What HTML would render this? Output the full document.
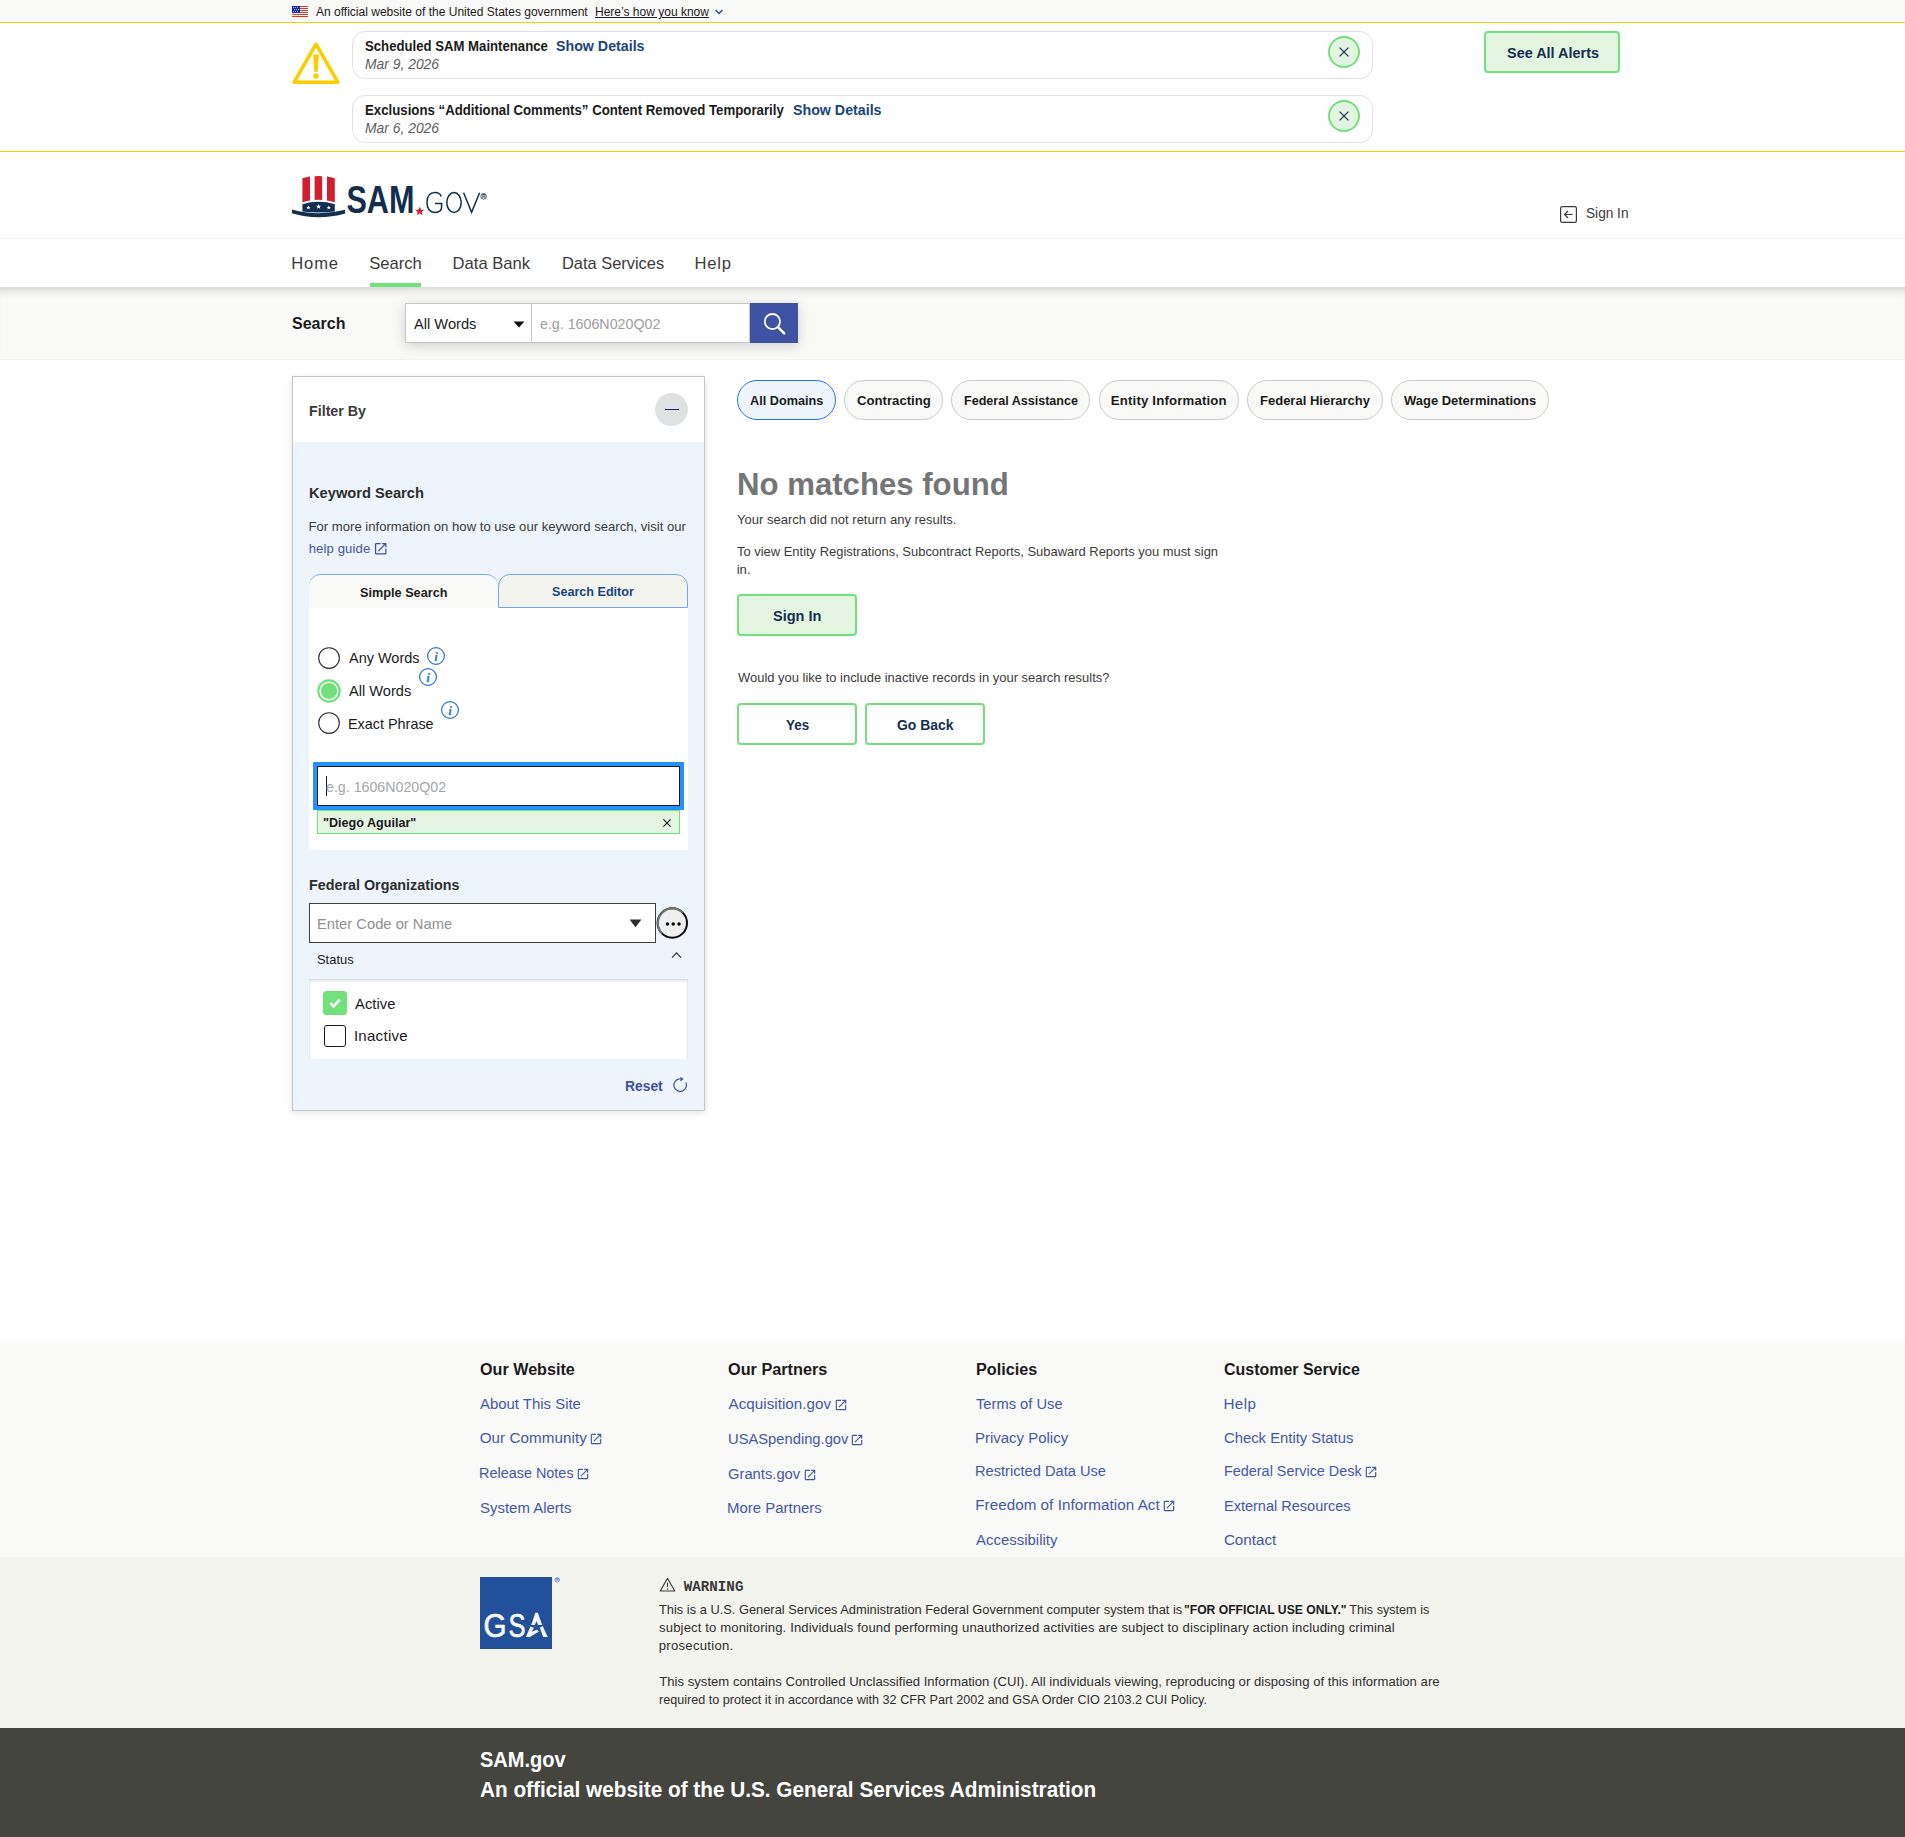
<!DOCTYPE html>
<html lang="en"><head><meta charset="utf-8"><title>SAM.gov | Search</title>
<style>
html,body{margin:0;padding:0;}
body{width:1905px;height:1837px;position:relative;overflow:hidden;background:#fff;font-family:"Liberation Sans", sans-serif;color:#1b1b1b;}
#page div,#page svg{position:absolute;box-sizing:border-box;}
.t{position:absolute;white-space:pre;line-height:1;transform-origin:0 50%;}
</style></head><body><div id="page" style="position:absolute;left:0;top:0;width:1905px;height:1837px;">
<div style="left:0px;top:0px;width:1905px;height:21px;background:#f9f9f7;"></div>
<svg style="left:292px;top:6px" width="16" height="11" viewBox="0 0 16 11">
<rect width="16" height="11" fill="#fff"/>
<g fill="#db3a1c"><rect y="0" width="16" height="1"/><rect y="2" width="16" height="1"/><rect y="4" width="16" height="1"/><rect y="6" width="16" height="1"/><rect y="8" width="16" height="1"/><rect y="10" width="16" height="1"/></g>
<rect width="8" height="7" fill="#1327b5"/>
<g fill="#fff"><circle cx="1.5" cy="1.6" r="0.5"/><circle cx="3.5" cy="1.6" r="0.5"/><circle cx="5.5" cy="1.6" r="0.5"/><circle cx="2.5" cy="3.5" r="0.5"/><circle cx="4.5" cy="3.5" r="0.5"/><circle cx="6.5" cy="3.5" r="0.5"/><circle cx="1.5" cy="5.4" r="0.5"/><circle cx="3.5" cy="5.4" r="0.5"/><circle cx="5.5" cy="5.4" r="0.5"/></g></svg>
<svg style="left:714px;top:8px" width="10" height="8" viewBox="0 0 10 8"><path d="M1.5 2 L5 5.5 L8.5 2" fill="none" stroke="#2b4b96" stroke-width="1.5"/></svg>
<div style="left:0px;top:22px;width:1905px;height:130px;background:#fff;border-top:1px solid #face00;border-bottom:1px solid #face00;"></div>
<svg style="left:290px;top:38px" width="52" height="50" viewBox="0 0 52 50">
<path d="M26 6.2 L47.8 44.2 L4.2 44.2 Z" fill="none" stroke="#face00" stroke-width="3.6" stroke-linejoin="round"/>
<path d="M23.7 16.8 L28.3 16.8 L27.5 33.6 L24.5 33.6 Z" fill="#face00" stroke="#face00" stroke-width="0.8" stroke-linejoin="round"/><circle cx="26" cy="38" r="2.7" fill="#face00"/></svg>
<div style="left:352px;top:31px;width:1021px;height:48px;border:1px solid #e1e1e1;border-radius:13px;background:#fff;"></div>
<svg style="left:1327px;top:35px" width="34" height="34" viewBox="0 0 34 34">
<circle cx="17" cy="17" r="15" fill="#e3f5e1" stroke="#70e17b" stroke-width="2"/>
<path d="M12.6 12.6 L21.4 21.4 M21.4 12.6 L12.6 21.4" stroke="#162e51" stroke-width="1.25" fill="none"/></svg>
<div style="left:352px;top:95px;width:1021px;height:48px;border:1px solid #e1e1e1;border-radius:13px;background:#fff;"></div>
<svg style="left:1327px;top:99px" width="34" height="34" viewBox="0 0 34 34">
<circle cx="17" cy="17" r="15" fill="#e3f5e1" stroke="#70e17b" stroke-width="2"/>
<path d="M12.6 12.6 L21.4 21.4 M21.4 12.6 L12.6 21.4" stroke="#162e51" stroke-width="1.25" fill="none"/></svg>
<div style="left:1484px;top:31px;width:136px;height:41.5px;border:2px solid #70e17b;border-radius:4px;background:#e3f5e1;"></div>
<div style="left:0px;top:238px;width:1905px;height:1px;background:#f3f3ee;"></div>
<svg style="left:290px;top:174px" width="200" height="44" viewBox="0 0 200 44">
<path d="M12.4 4.3 Q16 3 20 2.6 L20 26.6 Q16 27.2 12.4 28.4 Z" fill="#d0202e"/>
<path d="M24.6 2.2 Q28.4 1.9 32.2 2.2 L32.2 26 Q28.4 25.7 24.6 26 Z" fill="#d0202e"/>
<path d="M37 2.6 Q41 3 44.8 4.3 L44.8 28.4 Q41 27.2 37 26.6 Z" fill="#d0202e"/>
<path d="M12.4 30.2 Q28.6 25.4 44.8 30.2 L44.8 37.4 Q28.6 39.6 12.4 37.4 Z" fill="#112e51"/>
<g fill="#fff">
<path transform="translate(18.4,33.6) scale(0.13)" d="M0,-16 L4.7,-5 L16,-5 L7,2.5 L10,14 L0,7 L-10,14 L-7,2.5 L-16,-5 L-4.7,-5 Z"/>
<path transform="translate(28.6,32.6) scale(0.16)" d="M0,-16 L4.7,-5 L16,-5 L7,2.5 L10,14 L0,7 L-10,14 L-7,2.5 L-16,-5 L-4.7,-5 Z"/>
<path transform="translate(38.8,33.6) scale(0.13)" d="M0,-16 L4.7,-5 L16,-5 L7,2.5 L10,14 L0,7 L-10,14 L-7,2.5 L-16,-5 L-4.7,-5 Z"/>
</g>
<path d="M2.1 35.6 Q28 43 55 35.8 L55.2 39.4 Q28 47 1.9 39.2 Z" fill="#112e51"/>
<text x="56.4" y="38.7" font-family='"Liberation Sans", sans-serif' font-weight="700" font-size="39" fill="#112e51" textLength="68" lengthAdjust="spacingAndGlyphs">SAM</text>
<path transform="translate(129.7,37.2) scale(0.285)" d="M0,-16 L4.7,-5 L16,-5 L7,2.5 L10,14 L0,7 L-10,14 L-7,2.5 L-16,-5 L-4.7,-5 Z" fill="#d0202e"/>
<g fill="none" stroke="#112e51" stroke-width="1.5">
<path d="M151.2 22.6 Q150 18.6 145 18.6 Q137 18.6 137 28.6 Q137 38.4 145 38.4 Q151.6 38.4 151.6 33 L151.6 29.4 L145 29.4"/>
<ellipse cx="164" cy="28.5" rx="7.2" ry="9.9"/>
<path d="M173.6 18.8 L181.6 38.2 L189.6 18.8"/>
</g>
<circle cx="193.6" cy="22.3" r="2.8" fill="none" stroke="#112e51" stroke-width="0.8"/>
<text x="192" y="24.1" font-family='"Liberation Sans", sans-serif' font-weight="700" font-size="4.8" fill="#112e51">R</text>
</svg>
<svg style="left:1560px;top:206px" width="17" height="17" viewBox="0 0 17 17">
<rect x="0.6" y="0.6" width="15.8" height="15.8" rx="1.6" fill="none" stroke="#3a3a3a" stroke-width="1.2"/>
<path d="M12.6 8.5 L4.6 8.5 M8 5 L4.6 8.5 L8 12" fill="none" stroke="#3a3a3a" stroke-width="1.2"/></svg>
<div style="left:370px;top:283px;width:51px;height:4px;background:#70e17b;"></div>
<div style="left:0px;top:287px;width:1905px;height:73px;background:#f9f9f7;border-bottom:1px solid #f3f3ee;box-shadow:inset 0 9px 9px -6px rgba(0,0,0,0.16);"></div>
<div style="left:405px;top:303px;width:393px;height:40px;box-shadow:0 3px 12px rgba(0,0,0,0.16);background:#fff;"></div>
<div style="left:405px;top:303px;width:127px;height:39.5px;border:1px solid #c6c6c6;background:#fff;"></div>
<div style="left:531px;top:303px;width:219px;height:39.5px;border:1px solid #c6c6c6;background:#fff;"></div>
<svg style="left:513px;top:321px" width="12" height="7" viewBox="0 0 12 7"><path d="M0.6 0.6 L11.4 0.6 L6 6.6 Z" fill="#111"/></svg>
<div style="left:750px;top:303px;width:48px;height:40px;background:#3f53a5;"></div>
<svg style="left:761px;top:310px" width="26" height="26" viewBox="0 0 26 26">
<circle cx="11.4" cy="11.6" r="7.6" fill="none" stroke="#fff" stroke-width="1.8"/>
<path d="M17 17.2 L23.2 23.4" stroke="#fff" stroke-width="2.4" stroke-linecap="round"/></svg>
<div style="left:292px;top:376px;width:413px;height:734.5px;background:#edf4fb;border:1px solid #c4c5c7;box-shadow:0 2px 7px rgba(0,0,0,0.115);"></div>
<div style="left:293px;top:377px;width:411px;height:65px;background:#fff;"></div>
<div style="left:654.8px;top:393px;width:33.2px;height:33.2px;border-radius:50%;background:#dfe1e2;"></div>
<div style="left:665px;top:408.7px;width:14px;height:1.4px;background:#162e51;"></div>
<svg style="left:372.9px;top:540.9px" width="15.4" height="15.4" viewBox="0 0 24 24"><path d="M19 19H5V5h7V3H5a2 2 0 0 0-2 2v14a2 2 0 0 0 2 2h14c1.1 0 2-.9 2-2v-7h-2v7zM14 3v2h3.59l-9.83 9.83 1.41 1.41L19 6.41V10h2V3h-7z" fill="#3f52a3"/></svg>
<div style="left:309px;top:574px;width:189.3px;height:34px;background:#f9f9f7;border-top:1px solid #73a8e8;border-radius:12px 12px 0 0;"></div>
<div style="left:498px;top:574px;width:189.8px;height:34px;background:#f3f4ee;border:1px solid #73a8e8;border-radius:12px 12px 0 0;"></div>
<div style="left:309px;top:608px;width:378.8px;height:242px;background:#fff;"></div>
<svg style="left:316px;top:644.8px" width="26" height="26" viewBox="0 0 26 26"><circle cx="13" cy="13" r="10.3" fill="#fff" stroke="#2e2e2e" stroke-width="1.15"/></svg>
<svg style="left:316px;top:678px" width="26" height="26" viewBox="0 0 26 26"><circle cx="13" cy="13" r="10.7" fill="#fff" stroke="#70e17b" stroke-width="2.2"/><circle cx="13" cy="13" r="8.1" fill="#70e17b"/></svg>
<svg style="left:316px;top:710px" width="26" height="26" viewBox="0 0 26 26"><circle cx="13" cy="13" r="10.3" fill="#fff" stroke="#2e2e2e" stroke-width="1.15"/></svg>
<svg style="left:426.2px;top:646.3px" width="20" height="20" viewBox="0 0 20 20"><circle cx="10" cy="10" r="8.4" fill="none" stroke="#2672de" stroke-width="1.2"/>
<text x="10" y="14.6" text-anchor="middle" font-family='"Liberation Serif", serif' font-style="italic" font-weight="700" font-size="13" fill="#2672de">i</text></svg>
<svg style="left:418px;top:667.3px" width="20" height="20" viewBox="0 0 20 20"><circle cx="10" cy="10" r="8.4" fill="none" stroke="#2672de" stroke-width="1.2"/>
<text x="10" y="14.6" text-anchor="middle" font-family='"Liberation Serif", serif' font-style="italic" font-weight="700" font-size="13" fill="#2672de">i</text></svg>
<svg style="left:440.1px;top:700px" width="20" height="20" viewBox="0 0 20 20"><circle cx="10" cy="10" r="8.4" fill="none" stroke="#2672de" stroke-width="1.2"/>
<text x="10" y="14.6" text-anchor="middle" font-family='"Liberation Serif", serif' font-style="italic" font-weight="700" font-size="13" fill="#2672de">i</text></svg>
<div style="left:313.4px;top:762.3px;width:370.4px;height:47.6px;background:#2491ff;"></div>
<div style="left:317.4px;top:766px;width:362.8px;height:40px;background:#fff;border:1px solid #1b1b1b;"></div>
<div style="left:326px;top:776.2px;width:1px;height:19.4px;background:#1b1b1b;"></div>
<div style="left:317px;top:810px;width:363px;height:24px;background:#e3f5e1;border:1px solid #70e17b;"></div>
<svg style="left:662px;top:818px" width="10" height="10" viewBox="0 0 10 10"><path d="M1.4 1.4 L8.6 8.6 M8.6 1.4 L1.4 8.6" stroke="#1b1b1b" stroke-width="1.2" fill="none"/></svg>
<div style="left:309px;top:903px;width:347px;height:40px;background:#fff;border:1px solid #3f3f38;"></div>
<svg style="left:629.2px;top:918.6px" width="13" height="9" viewBox="0 0 13 9"><path d="M0.6 0.5 L12.4 0.5 L6.5 8.2 Z" fill="#2e2e2a"/></svg>
<svg style="left:656px;top:907px" width="33" height="33" viewBox="0 0 33 33"><circle cx="16.3" cy="16.0" r="14.7" fill="#efefef" stroke="#0a0a0a" stroke-width="2"/>
<path d="M5.91 26.39 A14.7 14.7 0 0 1 26.69 5.61" fill="none" stroke="#767676" stroke-width="2"/>
<circle cx="11.5" cy="17.1" r="1.75" fill="#0a0a0a"/><circle cx="17.2" cy="17.1" r="1.75" fill="#0a0a0a"/><circle cx="23" cy="17.1" r="1.75" fill="#0a0a0a"/></svg>
<svg style="left:670px;top:951px" width="13" height="9" viewBox="0 0 13 9"><path d="M2.1 6.7 L6.55 1.9 L11 6.7" fill="none" stroke="#2e2e2e" stroke-width="1.1"/></svg>
<div style="left:309px;top:979.4px;width:378.7px;height:80px;background:#fff;border:1px solid #e3e6e9;border-top-color:#d9dcdf;border-bottom:none;box-shadow:inset 0 2px 2px rgba(0,0,0,0.07);"></div>
<div style="left:323px;top:991px;width:24px;height:24px;background:#70e17b;border-radius:3.5px;"></div>
<svg style="left:323px;top:991px" width="24" height="24" viewBox="0 0 24 24"><path d="M7.2 12 L10.6 15.4 L16.8 8.6" fill="none" stroke="#fff" stroke-width="2.6"/></svg>
<div style="left:323.8px;top:1024.8px;width:22.2px;height:22.2px;background:#fff;border:1.6px solid #1b1b1b;border-radius:3px;"></div>
<svg style="left:671.5px;top:1075.5px" width="17" height="17" viewBox="0 0 17 17"><path d="M13.9 6.44 A6.3 6.3 0 1 1 7.65 2.82" fill="none" stroke="#3d4fa3" stroke-width="1.15"/>
<path d="M8.3 0.7 L11.7 3.1 L8.3 5.5 Z" fill="#3d4fa3"/></svg>
<div style="left:737px;top:380.3px;width:98.6px;height:39.6px;border:1px solid #2672de;border-radius:20px;background:#eef5fd;"></div>
<div style="left:843.8px;top:380.3px;width:98.8px;height:39.6px;border:1px solid #c9cbcd;border-radius:20px;background:#f9f9f7;"></div>
<div style="left:951px;top:380.3px;width:139.4px;height:39.6px;border:1px solid #c9cbcd;border-radius:20px;background:#f9f9f7;"></div>
<div style="left:1098.8px;top:380.3px;width:139.9px;height:39.6px;border:1px solid #c9cbcd;border-radius:20px;background:#f9f9f7;"></div>
<div style="left:1247px;top:380.3px;width:136px;height:39.6px;border:1px solid #c9cbcd;border-radius:20px;background:#f9f9f7;"></div>
<div style="left:1390.7px;top:380.3px;width:157.9px;height:39.6px;border:1px solid #c9cbcd;border-radius:20px;background:#f9f9f7;"></div>
<div style="left:737px;top:594px;width:120px;height:42px;border:2px solid #70e17b;border-radius:4px;background:#e3f5e1;"></div>
<div style="left:737px;top:703px;width:120px;height:42px;border:2px solid #70e17b;border-radius:4px;background:#fff;"></div>
<div style="left:865px;top:703px;width:120px;height:42px;border:2px solid #70e17b;border-radius:4px;background:#fff;"></div>
<div style="left:0px;top:1342.6px;width:1905px;height:214.4px;background:#f9f9f7;"></div>
<div style="left:0px;top:1556.8px;width:1905px;height:171.4px;background:#f4f4ef;"></div>
<div style="left:0px;top:1728px;width:1905px;height:109px;background:#454540;"></div>
<svg style="left:589.4px;top:1432.1000000000001px" width="14" height="14" viewBox="0 0 24 24"><path d="M19 19H5V5h7V3H5a2 2 0 0 0-2 2v14a2 2 0 0 0 2 2h14c1.1 0 2-.9 2-2v-7h-2v7zM14 3v2h3.59l-9.83 9.83 1.41 1.41L19 6.41V10h2V3h-7z" fill="#4458a8"/></svg>
<svg style="left:575.8px;top:1466.7px" width="14" height="14" viewBox="0 0 24 24"><path d="M19 19H5V5h7V3H5a2 2 0 0 0-2 2v14a2 2 0 0 0 2 2h14c1.1 0 2-.9 2-2v-7h-2v7zM14 3v2h3.59l-9.83 9.83 1.41 1.41L19 6.41V10h2V3h-7z" fill="#4458a8"/></svg>
<svg style="left:833.5px;top:1398.0px" width="14" height="14" viewBox="0 0 24 24"><path d="M19 19H5V5h7V3H5a2 2 0 0 0-2 2v14a2 2 0 0 0 2 2h14c1.1 0 2-.9 2-2v-7h-2v7zM14 3v2h3.59l-9.83 9.83 1.41 1.41L19 6.41V10h2V3h-7z" fill="#4458a8"/></svg>
<svg style="left:850.3000000000001px;top:1433.2px" width="14" height="14" viewBox="0 0 24 24"><path d="M19 19H5V5h7V3H5a2 2 0 0 0-2 2v14a2 2 0 0 0 2 2h14c1.1 0 2-.9 2-2v-7h-2v7zM14 3v2h3.59l-9.83 9.83 1.41 1.41L19 6.41V10h2V3h-7z" fill="#4458a8"/></svg>
<svg style="left:802.5px;top:1467.8px" width="14" height="14" viewBox="0 0 24 24"><path d="M19 19H5V5h7V3H5a2 2 0 0 0-2 2v14a2 2 0 0 0 2 2h14c1.1 0 2-.9 2-2v-7h-2v7zM14 3v2h3.59l-9.83 9.83 1.41 1.41L19 6.41V10h2V3h-7z" fill="#4458a8"/></svg>
<svg style="left:1162.1000000000001px;top:1499.2px" width="14" height="14" viewBox="0 0 24 24"><path d="M19 19H5V5h7V3H5a2 2 0 0 0-2 2v14a2 2 0 0 0 2 2h14c1.1 0 2-.9 2-2v-7h-2v7zM14 3v2h3.59l-9.83 9.83 1.41 1.41L19 6.41V10h2V3h-7z" fill="#4458a8"/></svg>
<svg style="left:1363.7px;top:1465.2px" width="14" height="14" viewBox="0 0 24 24"><path d="M19 19H5V5h7V3H5a2 2 0 0 0-2 2v14a2 2 0 0 0 2 2h14c1.1 0 2-.9 2-2v-7h-2v7zM14 3v2h3.59l-9.83 9.83 1.41 1.41L19 6.41V10h2V3h-7z" fill="#4458a8"/></svg>
<svg style="left:480px;top:1577px" width="82" height="73" viewBox="0 0 82 73">
<rect x="0" y="0" width="72" height="72" fill="#22509a"/>
<g fill="#f7f7f2" stroke="#f7f7f2" stroke-width="0.7" font-family='"Liberation Sans", sans-serif' font-size="34">
<text x="3.4" y="59.9" textLength="23" lengthAdjust="spacingAndGlyphs">G</text>
<text x="28.4" y="59.9" textLength="17" lengthAdjust="spacingAndGlyphs">S</text>
<polygon stroke="none" points="55.4,35.8 57.8,35.8 62.2,47.9 58.2,47.9 56.4,44.2 54.8,47.9 51.2,47.9"/>
<polygon stroke="none" points="59.8,50.7 62.7,48.9 67.7,59.9 63.2,59.9"/>
<polygon stroke="none" points="50.4,49.4 53.8,50.7 51.9,54.7 56.7,52.8 59,54.4 49.8,59.9 45.9,59.9"/>
</g>
<circle cx="77.2" cy="2.9" r="2.3" fill="none" stroke="#4a6fae" stroke-width="0.7"/>
<text x="75.9" y="4.4" font-family='"Liberation Sans", sans-serif' font-weight="700" font-size="3.8" fill="#4a6fae">R</text>
</svg>
<svg style="left:659px;top:1577px" width="17" height="15" viewBox="0 0 17 15"><path d="M8.5 1.4 L15.8 14 L1.2 14 Z" fill="none" stroke="#3a3a3a" stroke-width="1.1" stroke-linejoin="round"/>
<path d="M8.5 5.6 L8.5 10" stroke="#3a3a3a" stroke-width="1.1"/><circle cx="8.5" cy="11.9" r="0.75" fill="#3a3a3a"/></svg>
<span class="t" style='left:315.8px;top:6px;font-size:12.3px;transform:scaleX(0.9774);'>An official website of the United States government</span>
<span class="t" style='left:595.0px;top:6px;font-size:12.3px;transform:scaleX(0.9769);text-decoration:underline;'>Here’s how you know</span>
<span class="t" style='left:365.1px;top:39px;font-size:14.6px;font-weight:700;transform:scaleX(0.9018);'>Scheduled SAM Maintenance</span>
<span class="t" style='left:556.1px;top:39px;font-size:14.6px;font-weight:700;color:#1a4480;transform:scaleX(0.9743);'>Show Details</span>
<span class="t" style='left:365.2px;top:57px;font-size:14.8px;color:#5c5c5c;font-style:italic;transform:scaleX(0.9374);'>Mar 9, 2026</span>
<span class="t" style='left:364.6px;top:103px;font-size:14.6px;font-weight:700;transform:scaleX(0.9065);'>Exclusions “Additional Comments” Content Removed Temporarily</span>
<span class="t" style='left:792.6px;top:103px;font-size:14.6px;font-weight:700;color:#1a4480;transform:scaleX(0.9743);'>Show Details</span>
<span class="t" style='left:365.2px;top:121px;font-size:14.8px;color:#5c5c5c;font-style:italic;transform:scaleX(0.9374);'>Mar 6, 2026</span>
<span class="t" style='left:1506.6px;top:45px;font-size:15.2px;font-weight:700;color:#162e51;transform:scaleX(0.9505);'>See All Alerts</span>
<span class="t" style='left:1585.7px;top:206px;font-size:14.8px;color:#3a3a3a;transform:scaleX(0.9225);'>Sign In</span>
<span class="t" style='left:291.2px;top:256px;font-size:16.6px;color:#3a3a3a;letter-spacing:0.878px;'>Home</span>
<span class="t" style='left:369.2px;top:256px;font-size:16.6px;color:#3a3a3a;letter-spacing:0.011px;'>Search</span>
<span class="t" style='left:452.6px;top:256px;font-size:16.6px;color:#3a3a3a;'>Data Bank</span>
<span class="t" style='left:561.5px;top:256px;font-size:16.6px;color:#3a3a3a;transform:scaleX(0.9888);'>Data Services</span>
<span class="t" style='left:694.4px;top:256px;font-size:16.6px;color:#3a3a3a;letter-spacing:0.806px;'>Help</span>
<span class="t" style='left:292.0px;top:316px;font-size:16.8px;font-weight:700;transform:scaleX(0.9549);'>Search</span>
<span class="t" style='left:414.4px;top:317px;font-size:14.8px;transform:scaleX(0.9891);'>All Words</span>
<span class="t" style='left:539.9px;top:317px;font-size:14.8px;color:#9e9e9e;transform:scaleX(0.9621);'>e.g. 1606N020Q02</span>
<span class="t" style='left:308.6px;top:403px;font-size:15px;font-weight:700;color:#3a3a3a;transform:scaleX(0.9503);'>Filter By</span>
<span class="t" style='left:308.6px;top:485px;font-size:15px;font-weight:700;color:#2e2e2e;transform:scaleX(0.9774);'>Keyword Search</span>
<span class="t" style='left:308.5px;top:520px;font-size:13.1px;color:#3a3a3a;letter-spacing:0.008px;'>For more information on how to use our keyword search, visit our</span>
<span class="t" style='left:308.7px;top:542px;font-size:13.1px;color:#4257a6;letter-spacing:0.117px;'>help guide</span>
<span class="t" style='left:359.6px;top:586px;font-size:13.4px;font-weight:700;transform:scaleX(0.9475);'>Simple Search</span>
<span class="t" style='left:552.1px;top:585px;font-size:13.4px;font-weight:700;color:#1a4480;transform:scaleX(0.9400);'>Search Editor</span>
<span class="t" style='left:349.3px;top:650px;font-size:15px;transform:scaleX(0.9652);'>Any Words</span>
<span class="t" style='left:349.3px;top:683px;font-size:15px;transform:scaleX(0.9742);'>All Words</span>
<span class="t" style='left:348.1px;top:716px;font-size:15px;transform:scaleX(0.9597);'>Exact Phrase</span>
<span class="t" style='left:326.0px;top:779px;font-size:15px;color:#a4a6a8;transform:scaleX(0.9474);'>e.g. 1606N020Q02</span>
<span class="t" style='left:322.6px;top:816px;font-size:13px;font-weight:700;transform:scaleX(0.9678);'>"Diego Aguilar"</span>
<span class="t" style='left:308.6px;top:877px;font-size:15px;font-weight:700;color:#2e2e2e;transform:scaleX(0.9549);'>Federal Organizations</span>
<span class="t" style='left:317.1px;top:916px;font-size:15px;color:#909090;transform:scaleX(0.9825);'>Enter Code or Name</span>
<span class="t" style='left:317.0px;top:953px;font-size:13.1px;transform:scaleX(0.9873);'>Status</span>
<span class="t" style='left:355.3px;top:996px;font-size:15px;transform:scaleX(0.9885);'>Active</span>
<span class="t" style='left:353.9px;top:1028px;font-size:15px;letter-spacing:0.293px;'>Inactive</span>
<span class="t" style='left:625.1px;top:1078px;font-size:15px;font-weight:700;color:#3d4fa3;transform:scaleX(0.9225);'>Reset</span>
<span class="t" style='left:750.2px;top:394px;font-size:13.2px;font-weight:700;transform:scaleX(0.9622);'>All Domains</span>
<span class="t" style='left:857.1px;top:394px;font-size:13.2px;font-weight:700;transform:scaleX(0.9976);'>Contracting</span>
<span class="t" style='left:963.5px;top:394px;font-size:13.2px;font-weight:700;transform:scaleX(0.9519);'>Federal Assistance</span>
<span class="t" style='left:1110.8px;top:394px;font-size:13.2px;font-weight:700;letter-spacing:0.175px;'>Entity Information</span>
<span class="t" style='left:1259.5px;top:394px;font-size:13.2px;font-weight:700;transform:scaleX(0.9867);'>Federal Hierarchy</span>
<span class="t" style='left:1403.6px;top:394px;font-size:13.2px;font-weight:700;transform:scaleX(0.9836);'>Wage Determinations</span>
<span class="t" style='left:737.1px;top:469px;font-size:31.5px;font-weight:700;color:#757575;transform:scaleX(0.9890);'>No matches found</span>
<span class="t" style='left:737.3px;top:513px;font-size:13.1px;color:#3a3a3a;transform:scaleX(0.9941);'>Your search did not return any results.</span>
<span class="t" style='left:737.3px;top:545px;font-size:13.1px;color:#3a3a3a;transform:scaleX(0.9880);'>To view Entity Registrations, Subcontract Reports, Subaward Reports you must sign</span>
<span class="t" style='left:736.7px;top:563px;font-size:13.1px;color:#3a3a3a;'>in.</span>
<span class="t" style='left:773.4px;top:608px;font-size:15.2px;font-weight:700;color:#162e51;transform:scaleX(0.9565);'>Sign In</span>
<span class="t" style='left:737.5px;top:671px;font-size:13.1px;color:#3a3a3a;transform:scaleX(0.9897);'>Would you like to include inactive records in your search results?</span>
<span class="t" style='left:786.2px;top:717px;font-size:15.2px;font-weight:700;color:#162e51;transform:scaleX(0.8852);'>Yes</span>
<span class="t" style='left:896.9px;top:717px;font-size:15.2px;font-weight:700;color:#162e51;transform:scaleX(0.9178);'>Go Back</span>
<span class="t" style='left:480.1px;top:1362px;font-size:16.8px;font-weight:700;transform:scaleX(0.9621);'>Our Website</span>
<span class="t" style='left:728.1px;top:1362px;font-size:16.8px;font-weight:700;transform:scaleX(0.9682);'>Our Partners</span>
<span class="t" style='left:975.7px;top:1362px;font-size:16.8px;font-weight:700;transform:scaleX(0.9639);'>Policies</span>
<span class="t" style='left:1224.1px;top:1362px;font-size:16.8px;font-weight:700;transform:scaleX(0.9515);'>Customer Service</span>
<span class="t" style='left:480.4px;top:1396px;font-size:15.2px;color:#4458a8;transform:scaleX(0.9822);'>About This Site</span>
<span class="t" style='left:479.7px;top:1430px;font-size:15.2px;color:#4458a8;letter-spacing:0.075px;'>Our Community</span>
<span class="t" style='left:479.2px;top:1465px;font-size:15.2px;color:#4458a8;transform:scaleX(0.9496);'>Release Notes</span>
<span class="t" style='left:479.7px;top:1500px;font-size:15.2px;color:#4458a8;transform:scaleX(0.9847);'>System Alerts</span>
<span class="t" style='left:728.6px;top:1396px;font-size:15.2px;color:#4458a8;letter-spacing:0.023px;'>Acquisition.gov</span>
<span class="t" style='left:727.5px;top:1431px;font-size:15.2px;color:#4458a8;transform:scaleX(0.9699);'>USASpending.gov</span>
<span class="t" style='left:727.9px;top:1466px;font-size:15.2px;color:#4458a8;transform:scaleX(0.9717);'>Grants.gov</span>
<span class="t" style='left:727.4px;top:1500px;font-size:15.2px;color:#4458a8;transform:scaleX(0.9848);'>More Partners</span>
<span class="t" style='left:976.1px;top:1396px;font-size:15.2px;color:#4458a8;transform:scaleX(0.9678);'>Terms of Use</span>
<span class="t" style='left:975.2px;top:1430px;font-size:15.2px;color:#4458a8;transform:scaleX(0.9855);'>Privacy Policy</span>
<span class="t" style='left:975.2px;top:1463px;font-size:15.2px;color:#4458a8;transform:scaleX(0.9635);'>Restricted Data Use</span>
<span class="t" style='left:975.2px;top:1497px;font-size:15.2px;color:#4458a8;letter-spacing:0.055px;'>Freedom of Information Act</span>
<span class="t" style='left:976.4px;top:1532px;font-size:15.2px;color:#4458a8;transform:scaleX(0.9848);'>Accessibility</span>
<span class="t" style='left:1223.5px;top:1396px;font-size:15.2px;color:#4458a8;letter-spacing:0.378px;'>Help</span>
<span class="t" style='left:1223.9px;top:1430px;font-size:15.2px;color:#4458a8;transform:scaleX(0.9763);'>Check Entity Status</span>
<span class="t" style='left:1223.5px;top:1463px;font-size:15.2px;color:#4458a8;transform:scaleX(0.9482);'>Federal Service Desk</span>
<span class="t" style='left:1223.5px;top:1498px;font-size:15.2px;color:#4458a8;transform:scaleX(0.9554);'>External Resources</span>
<span class="t" style='left:1223.9px;top:1532px;font-size:15.2px;color:#4458a8;'>Contact</span>
<span class="t" style='left:683.8px;top:1580px;font-size:14.2px;font-weight:700;color:#3a3a3a;font-family:"Liberation Mono", monospace;'>WARNING</span>
<span class="t" style='left:659.2px;top:1603px;font-size:13.1px;color:#2e2e2e;transform:scaleX(0.9809);'>This is a U.S. General Services Administration Federal Government computer system that is </span>
<span class="t" style='left:1184.2px;top:1603px;font-size:13.1px;font-weight:700;transform:scaleX(0.9271);'>"FOR OFFICIAL USE ONLY."</span>
<span class="t" style='left:1345.7px;top:1603px;font-size:13.1px;color:#2e2e2e;transform:scaleX(0.9642);'> This system is</span>
<span class="t" style='left:659.1px;top:1621px;font-size:13.1px;color:#2e2e2e;letter-spacing:0.129px;'>subject to monitoring. Individuals found performing unauthorized activities are subject to disciplinary action including criminal</span>
<span class="t" style='left:658.7px;top:1639px;font-size:13.1px;color:#2e2e2e;letter-spacing:0.291px;'>prosecution.</span>
<span class="t" style='left:659.2px;top:1675px;font-size:13.1px;color:#2e2e2e;letter-spacing:0.023px;'>This system contains Controlled Unclassified Information (CUI). All individuals viewing, reproducing or disposing of this information are</span>
<span class="t" style='left:658.7px;top:1693px;font-size:13.1px;color:#2e2e2e;transform:scaleX(0.9631);'>required to protect it in accordance with 32 CFR Part 2002 and GSA Order CIO 2103.2 CUI Policy.</span>
<span class="t" style='left:480.2px;top:1749px;font-size:21.6px;font-weight:700;color:#fff;transform:scaleX(0.9274);'>SAM.gov</span>
<span class="t" style='left:480.0px;top:1779px;font-size:21.6px;font-weight:700;color:#fff;transform:scaleX(0.9611);'>An official website of the U.S. General Services Administration</span>
</div></body></html>
